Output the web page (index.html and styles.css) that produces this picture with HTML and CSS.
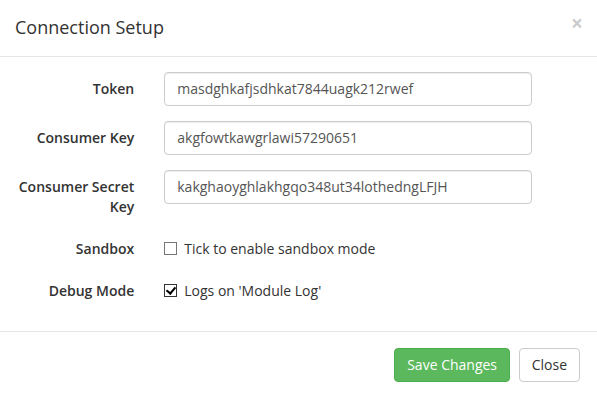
FILE: index.html
```html
<!DOCTYPE html>
<html lang="en">
<head>
  <meta charset="UTF-8" />
  <title>Connection Setup</title>
  <link rel="stylesheet" href="styles.css">
</head>
<body>
  <div class="modal">
    <div class="modal-header">
      <button class="close" type="button">&times;</button>
      <h4 class="modal-title">Connection Setup</h4>
    </div>

    <div class="modal-body">
      <form class="form-horizontal">
        <div class="form-group">
          <label class="control-label">Token</label>
          <div class="field">
            <input type="text" class="form-control" value="masdghkafjsdhkat7844uagk212rwef" />
          </div>
        </div>
        <div class="form-group">
          <label class="control-label">Consumer Key</label>
          <div class="field">
            <input type="text" class="form-control" value="akgfowtkawgrlawi57290651" />
          </div>
        </div>
        <div class="form-group">
          <label class="control-label">Consumer Secret Key</label>
          <div class="field">
            <input type="text" class="form-control" value="kakghaoyghlakhgqo348ut34lothedngLFJH" />
          </div>
        </div>
        <div class="form-group">
          <label class="control-label">Sandbox</label>
          <div class="field checkbox">
            <label><input type="checkbox" /> Tick to enable sandbox mode</label>
          </div>
        </div>
        <div class="form-group">
          <label class="control-label">Debug Mode</label>
          <div class="field checkbox">
            <label><input type="checkbox" checked /> Logs on 'Module Log'</label>
          </div>
        </div>
      </form>
    </div>

    <div class="modal-footer">
      <button type="button" class="btn btn-success">Save Changes</button>
      <button type="button" class="btn btn-default">Close</button>
    </div>
  </div>
</body>
</html>
```

FILE: styles.css
```css
* {
  box-sizing: border-box;
}

body {
  margin: 0;
  font-family: 'Open Sans', sans-serif;
  font-size: 14px;
  line-height: 1.42857;
  color: #333;
  background: #fff;
}

.modal {
  width: 597px;
  background: #fff;
}

.modal-header {
  padding: 15px;
  border-bottom: 1px solid #e5e5e5;
}

.modal-title {
  margin: 0;
  font-size: 18px;
  font-weight: 500;
  line-height: 1.42857;
  color: #333;
}

.close {
  float: right;
  margin-top: -2px;
  margin-right: -1px;
  padding: 0;
  border: 0;
  background: transparent;
  font-family: 'Open Sans', sans-serif;
  font-size: 21px;
  font-weight: bold;
  line-height: 1;
  color: #000;
  opacity: 0.2;
  cursor: pointer;
}

.modal-body {
  padding: 15px;
}

.form-horizontal {
  margin: 0 -15px;
}

.form-group {
  display: flex;
  margin-bottom: 15px;
}

.control-label {
  width: 25%;
  padding: 7px 15px 0;
  text-align: right;
  font-weight: 600;
  color: #333;
}

.field {
  width: 66.6667%;
  padding: 0 15px;
}

.form-control {
  display: block;
  width: 100%;
  height: 34px;
  padding: 6px 12px;
  font-family: 'Open Sans', sans-serif;
  font-size: 14px;
  line-height: 1.42857;
  color: #555;
  background: #fff;
  border: 1px solid #ccc;
  border-radius: 4px;
  box-shadow: inset 0 1px 1px rgba(0, 0, 0, 0.075);
}

.checkbox {
  padding-top: 7px;
  min-height: 27px;
}

.checkbox label {
  display: flex;
  align-items: center;
  font-weight: normal;
  color: #333;
}

.checkbox input {
  appearance: none;
  -webkit-appearance: none;
  width: 13px;
  height: 13px;
  margin: 0 7px 0 0;
  border: 1px solid #767676;
  background: #fff;
  position: relative;
}

.checkbox input:checked {
  border-color: #333;
}

.checkbox input:checked::after {
  content: '';
  position: absolute;
  left: 3px;
  top: 0px;
  width: 4px;
  height: 7px;
  border: solid #000;
  border-width: 0 2px 2px 0;
  transform: rotate(40deg);
}

.modal-footer {
  padding: 16px 17px 14px 15px;
  text-align: right;
  border-top: 1px solid #e5e5e5;
}

.btn {
  display: inline-block;
  padding: 6px 12px;
  font-family: 'Open Sans', sans-serif;
  font-size: 14px;
  line-height: 1.42857;
  border: 1px solid transparent;
  border-radius: 4px;
  cursor: pointer;
}

.btn + .btn {
  margin-left: 5px;
}

.btn-success {
  color: #fff;
  background: #5cb85c;
  border-color: #4cae4c;
}

.btn-default {
  color: #333;
  background: #fff;
  border-color: #ccc;
}
```
